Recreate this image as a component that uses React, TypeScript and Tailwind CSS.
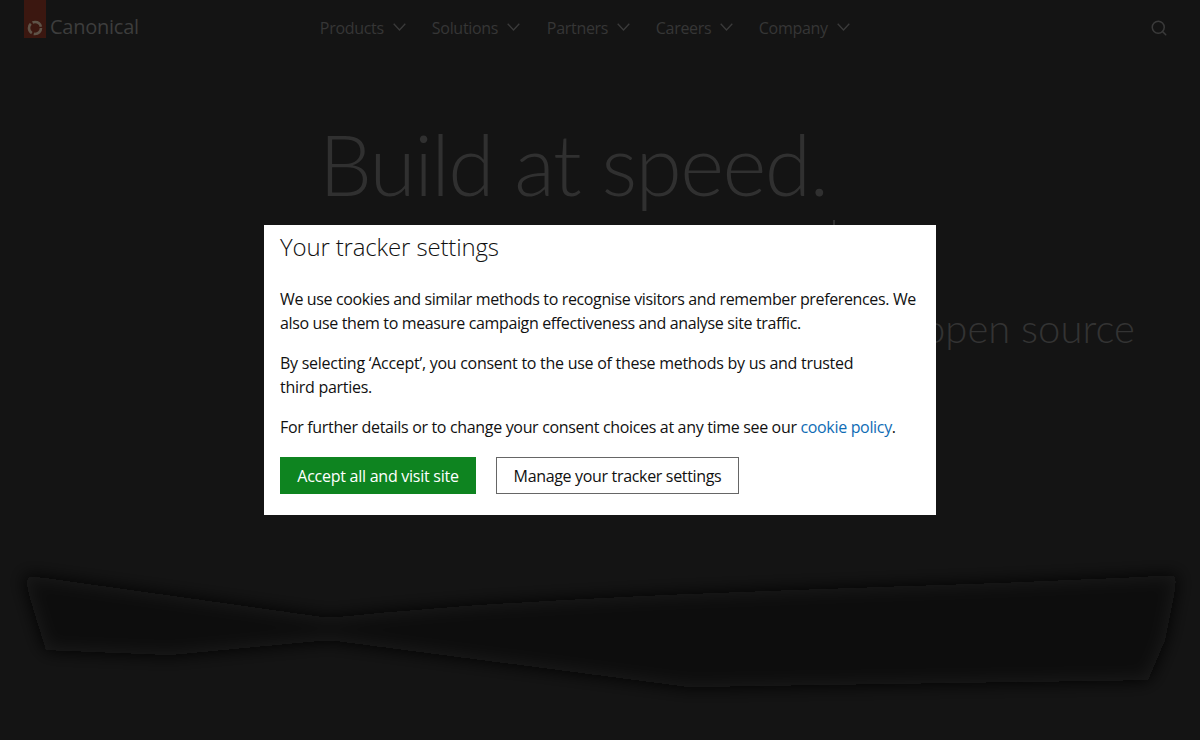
import { Search } from "lucide-react";

const nav = [
  { label: "Products", width: 112 },
  { label: "Solutions", width: 115 },
  { label: "Partners", width: 109 },
  { label: "Careers", width: 103 },
  { label: "Company", width: 95 },
];

function Logo() {
  return (
    <svg width="18" height="18" viewBox="0 0 18 18" fill="none" className="shrink-0">
      <circle cx="9" cy="9" r="6" stroke="#5f5348" strokeWidth="2.6" strokeDasharray="10.5 2" />
    </svg>
  );
}

function Chevron() {
  return (
    <svg width="13" height="8" viewBox="0 0 13 8" fill="none" className="mb-[3px] shrink-0">
      <path d="M0.7 0.7 L6.5 7 L12.3 0.7" stroke="#3a3a3a" strokeWidth="1.3" />
    </svg>
  );
}

export default function App() {
  return (
    <div className="relative h-[740px] w-[1200px] overflow-hidden bg-[#141414] font-['Open_Sans',sans-serif] text-[#333333]">
      <header className="flex h-[56px] items-start pl-[24px] pr-[32px]">
        <div className="flex h-[38px] w-[22px] items-end justify-center overflow-hidden bg-[#3b1710] pb-px">
          <Logo />
        </div>
        <span className="ml-[4px] mt-[14px] text-[20px] leading-[26px] tracking-[-0.25px] text-[#3d3d3d]">Canonical</span>
        <nav className="ml-[181px] mt-[16px] flex text-[16px] leading-[24px] tracking-[-0.3px] text-[#363636]">
          {nav.map((n) => (
            <div key={n.label} className="flex items-center gap-[9px]" style={{ width: n.width }}>
              <span>{n.label}</span>
              <Chevron />
            </div>
          ))}
        </nav>
        <Search size={18} strokeWidth={2} className="ml-auto mt-[19px] text-[#3a3a3a]" />
      </header>

      <main className="pl-[319px] pt-[56px]">
        <h1 className="font-['Lato',sans-serif] text-[84px] font-light leading-[104px] tracking-[-1.55px] text-[#303030]">Build at speed.</h1>
        <p className="ml-[604px] mt-[90px] font-['Lato',sans-serif] text-[40px] font-light leading-[44px] text-[#333333]">open source</p>
      </main>

      <div className="absolute left-[833px] top-[220px] h-[5px] w-[2px] bg-[#303030]" />

      <svg className="absolute bottom-0 left-0" width="1200" height="240" viewBox="0 500 1200 240" fill="none">
        <defs>
          <filter id="soft" x="-5%" y="-30%" width="110%" height="160%">
            <feGaussianBlur stdDeviation="9" />
          </filter>
        </defs>
        <path d="M23 575 L329 618 C600 590 900 590 1178 575 L1165 640 L1148 680 L689 687 L329 640 L170 655 L46 650 Z" fill="#111111" filter="url(#soft)" />
      </svg>

      <div className="absolute left-[264px] top-[225px] h-[290px] w-[672px] bg-white px-[16px] text-[16px] leading-[24px] text-[#111111]">
        <h2 className="mt-[6px] text-[24px] font-light leading-[32px] tracking-[-0.15px]">Your tracker settings</h2>
        <p className="mt-[24px] tracking-[-0.36px]">We use cookies and similar methods to recognise visitors and remember preferences. We also use them to measure campaign effectiveness and analyse site traffic.</p>
        <p className="mt-[16px] w-[590px] tracking-[-0.27px]">By selecting ‘Accept’, you consent to the use of these methods by us and trusted third parties.</p>
        <p className="mt-[16px] tracking-[-0.33px]">
          For further details or to change your consent choices at any time see our <a className="text-[#0f6cb5]">cookie policy</a>.
        </p>
        <div className="mt-[18px] flex gap-[20px]">
          <button className="h-[37px] w-[196px] bg-[#0e8420] tracking-[-0.26px] text-white">Accept all and visit site</button>
          <button className="h-[37px] w-[243px] border border-[#666666] tracking-[-0.33px] text-[#111111]">Manage your tracker settings</button>
        </div>
      </div>
    </div>
  );
}
